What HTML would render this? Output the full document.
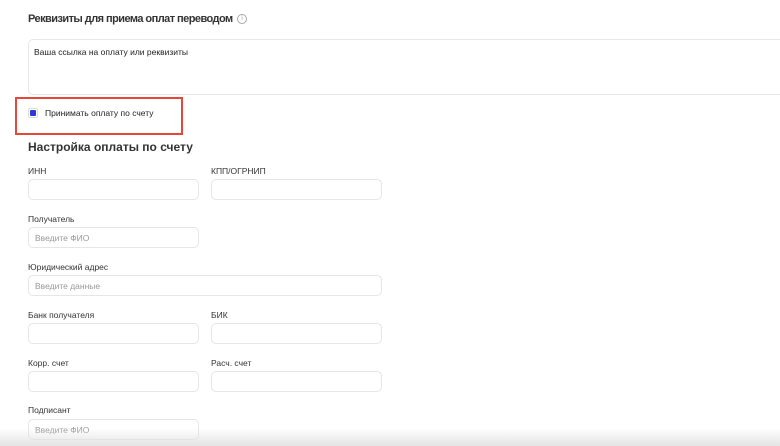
<!DOCTYPE html>
<html><head><meta charset="utf-8"><style>
body{margin:0;width:780px;height:446px;overflow:hidden;background:#fff;font-family:"Liberation Sans",sans-serif;color:#222;position:relative}
.a{position:absolute}
.in{position:absolute;height:21px;border:1px solid #e6e6e6;border-radius:5px;box-sizing:border-box;font-size:8.5px;color:#999;padding-left:6px;line-height:20px}
.lb{position:absolute;font-size:8.5px;color:#333}
</style></head><body>
<div class="a" style="left:28px;top:13px;font-size:11px;letter-spacing:-0.55px;font-weight:bold;color:#333">Реквизиты для приема оплат переводом</div>
<div class="a" style="left:237px;top:14px;width:8px;height:8px;border:1px solid #aaa;border-radius:50%;font-size:6px;color:#999;text-align:center;line-height:8px">i</div>
<div class="a" style="left:28px;top:39px;width:770px;height:56px;border:1px solid #e8e8e8;border-radius:5px;box-sizing:border-box"></div>
<div class="a" style="left:34px;top:47px;font-size:8.5px;color:#222">Ваша ссылка на оплату или реквизиты</div>
<div class="a" style="left:15px;top:97px;width:168px;height:38px;border:2px solid #e5483b;box-sizing:border-box"></div>
<div class="a" style="left:28px;top:108px;width:10px;height:10px;border:1px solid #ddd;border-radius:2px;box-sizing:border-box;background:#fff"><div style="margin:1px;width:6px;height:6px;background:#2a3ae0;border-radius:1px"></div></div>
<div class="a" style="left:45px;top:108px;font-size:8.5px;color:#222">Принимать оплату по счету</div>
<div class="a" style="left:28px;top:140px;font-size:12px;font-weight:bold;color:#333">Настройка оплаты по счету</div>
<div class="lb" style="left:28px;top:166px">ИНН</div><div class="lb" style="left:211px;top:166px">КПП/ОГРНИП</div>
<div class="in" style="left:28px;top:179px;width:171px"></div><div class="in" style="left:211px;top:179px;width:171px"></div>
<div class="lb" style="left:28px;top:214px">Получатель</div>
<div class="in" style="left:28px;top:227px;width:171px">Введите ФИО</div>
<div class="lb" style="left:28px;top:262px">Юридический адрес</div>
<div class="in" style="left:28px;top:275px;width:354px">Введите данные</div>
<div class="lb" style="left:28px;top:310px">Банк получателя</div><div class="lb" style="left:211px;top:310px">БИК</div>
<div class="in" style="left:28px;top:323px;width:171px"></div><div class="in" style="left:211px;top:323px;width:171px"></div>
<div class="lb" style="left:28px;top:358px">Корр. счет</div><div class="lb" style="left:211px;top:358px">Расч. счет</div>
<div class="in" style="left:28px;top:371px;width:171px"></div><div class="in" style="left:211px;top:371px;width:171px"></div>
<div class="lb" style="left:28px;top:405px">Подписант</div>
<div class="in" style="left:28px;top:419px;width:171px">Введите ФИО</div>
<div class="a" style="left:0;top:428px;width:780px;height:18px;background:linear-gradient(rgba(240,240,240,0),rgba(225,225,225,0.9))"></div>
</body></html>
